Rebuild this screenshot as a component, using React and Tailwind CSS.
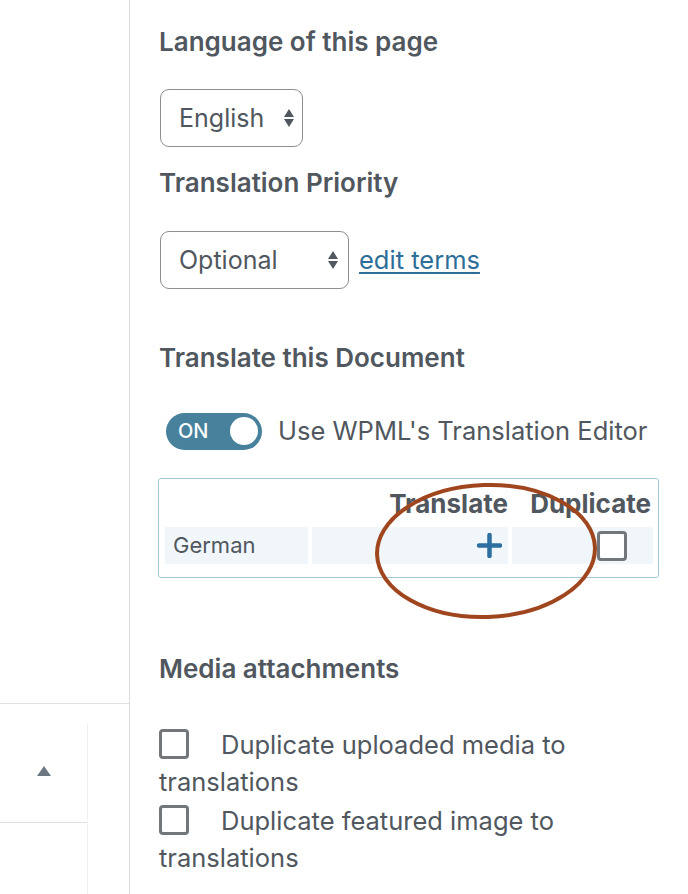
import React from 'react';

const SelectArrows = () => (
  <svg width="12" height="20" viewBox="0 0 12 20" className="shrink-0">
    <path d="M6 1 L11 9 L1 9 Z" fill="#50575e" />
    <path d="M6 19 L11 11 L1 11 Z" fill="#50575e" />
  </svg>
);

const FakeSelect = ({ value, width, arrowPad }) => (
  <div
    className={`flex h-[58px] items-center justify-between rounded-[9px] border-[1.5px] border-[#8c8f94] bg-white pl-[18px] ${width} ${arrowPad}`}
  >
    <span className="text-[25px] leading-none text-[#50575e]">{value}</span>
    <SelectArrows />
  </div>
);

const Checkbox = ({ className = '' }) => (
  <span
    className={`inline-block h-[30px] w-[30px] rounded-[4px] border-[3px] border-[#72777c] bg-white ${className}`}
  />
);

const App = () => {
  return (
    <div className="relative flex h-[894px] w-[688px] overflow-hidden bg-white font-['Inter',sans-serif] text-[#50575e]">
      {/* Left column */}
      <aside className="flex w-[130px] shrink-0 flex-col border-r border-[#dcdcde]">
        <div className="mt-auto h-[191px] border-t border-[#e0e0e0] pt-[19px]">
          <div className="h-full w-[88px] border-r border-[#f0f0f1]">
            <div className="flex h-[100px] items-center justify-center border-b border-[#e0e0e0] pb-[4px]">
              <svg width="14" height="10" viewBox="0 0 14 10">
                <path d="M7 0 L14 10 L0 10 Z" fill="#6c7781" />
              </svg>
            </div>
          </div>
        </div>
      </aside>

      {/* Main panel */}
      <main className="flex-1 pl-[29px] pt-[27px]">
        <h2 className="text-[26px] font-semibold leading-[30px]">Language of this page</h2>
        <div className="mt-[32px] ml-[1px]">
          <FakeSelect value="English" width="w-[143px]" arrowPad="pr-[7px]" />
        </div>

        <h2 className="mt-[21px] text-[26px] font-semibold leading-[30px]">Translation Priority</h2>
        <div className="mt-[33px] ml-[1px] flex items-center">
          <FakeSelect value="Optional" width="w-[189px]" arrowPad="pr-[9px]" />
          <a href="#" className="ml-[10px] text-[25.5px] text-[#2c6e98] underline underline-offset-[3px]">
            edit terms
          </a>
        </div>

        <h2 className="mt-[54px] text-[26px] font-semibold leading-[30px]">Translate this Document</h2>
        <div className="mt-[39px] ml-[7px] flex items-center">
          <div className="flex h-[37px] w-[96px] items-center justify-between rounded-full bg-[#47819b] pl-[12px] pr-[4px]">
            <span className="text-[20px] font-medium leading-none text-white">ON</span>
            <span className="h-[28px] w-[28px] rounded-full bg-white" />
          </div>
          <span className="ml-[16px] text-[25.5px]">Use WPML's Translation Editor</span>
        </div>

        {/* Languages table */}
        <div className="mt-[28px] -ml-[1px] w-[501px] rounded-[3px] border border-[#a5c8d6] px-[6px] pb-[13px] pt-[10px]">
          <div className="grid grid-cols-[143px_196px_141px] gap-x-[4px]">
            <div />
            <div className="text-right text-[26px] font-bold leading-[30px] text-[#50575e]">Translate</div>
            <div className="pr-[2px] text-right text-[26px] font-bold leading-[30px] text-[#50575e]">Duplicate</div>
          </div>
          <div className="mt-[8px] grid h-[37px] grid-cols-[143px_196px_141px] gap-x-[4px]">
            <div className="flex items-center bg-[#f0f6fa] pl-[8px] text-[22px]">German</div>
            <div className="flex items-center justify-end bg-[#f0f6fa] pr-[6px]">
              <svg width="25" height="25" viewBox="0 0 25 25">
                <path d="M12.5 2 V23 M2 12.5 H23" stroke="#2d6fa0" strokeWidth="4.5" strokeLinecap="round" />
              </svg>
            </div>
            <div className="flex items-center justify-end bg-[#f0f6fa] pr-[26px]">
              <Checkbox />
            </div>
          </div>
        </div>

        <h2 className="mt-[76px] text-[26px] font-semibold leading-[30px]">Media attachments</h2>
        <div className="mt-[42px] w-[500px] text-[25.5px] leading-[37px]">
          <label className="block">
            <Checkbox className="mr-[32px] align-[-5px]" />
            Duplicate uploaded media to translations
          </label>
          <label className="mt-[2px] block">
            <Checkbox className="mr-[32px] align-[-5px]" />
            Duplicate featured image to translations
          </label>
        </div>
      </main>

      {/* Hand-drawn highlight */}
      <svg className="pointer-events-none absolute left-0 top-0" width="688" height="894">
        <ellipse
          cx="486"
          cy="551"
          rx="109"
          ry="66"
          transform="rotate(-2 486 551)"
          fill="none"
          stroke="#a0461e"
          strokeWidth="4"
        />
      </svg>
    </div>
  );
};

export default App;
